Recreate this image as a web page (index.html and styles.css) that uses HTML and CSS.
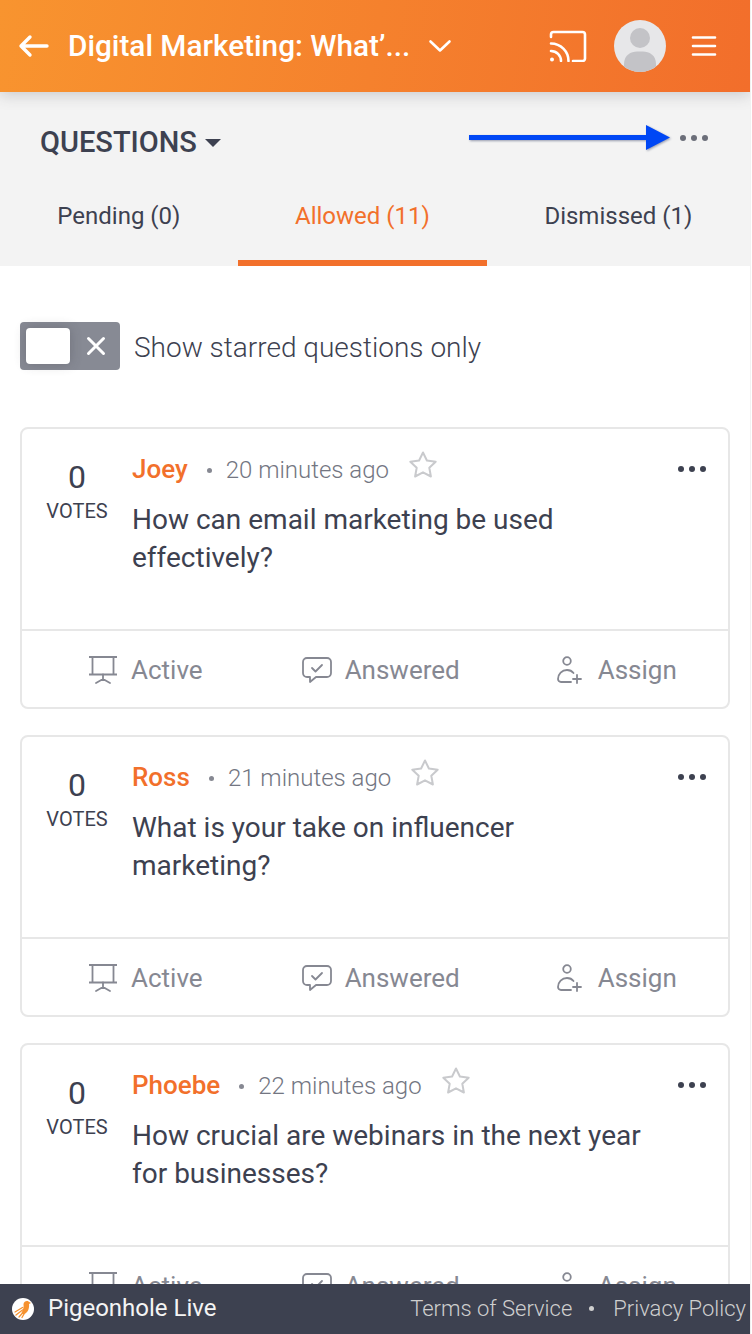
FILE: index.html
```html
<!DOCTYPE html>
<html lang="en">
<head>
<meta charset="utf-8">
<title>Questions</title>
<link rel="stylesheet" href="styles.css">
</head>
<body>
<div class="page">
  <header class="topbar">
    <svg class="back" width="32" height="24" viewBox="0 0 32 24"><path d="M30 12H4M13 3l-9 9 9 9" fill="none" stroke="#fff" stroke-width="3.4" stroke-linecap="round" stroke-linejoin="round"/></svg>
    <div class="title">Digital Marketing: What’...</div>
    <svg class="chev" width="24" height="14" viewBox="0 0 24 14"><path d="M2.500 2.500 12 11.500l9.500-9" fill="none" stroke="#fff" stroke-width="2.600" stroke-linecap="round" stroke-linejoin="round"/></svg>
    <svg class="cast" width="38" height="32" viewBox="0 0 38 32"><path d="M2 7V4.500A2.500 2.500 0 0 1 4.500 2h29A2.500 2.500 0 0 1 36 4.500v24a2.500 2.500 0 0 1-2.500 2.500H24" fill="none" stroke="#fff" stroke-width="2.600" stroke-linecap="round"/><path d="M2 13.500A17.500 17.500 0 0 1 19.500 31M2 21a10 10 0 0 1 10 10" fill="none" stroke="#fff" stroke-width="2.600" stroke-linecap="round"/><circle cx="3" cy="29.500" r="2" fill="#fff"/></svg>
    <svg class="avatar" width="52" height="52" viewBox="0 0 52 52"><defs><clipPath id="av"><circle cx="26" cy="26" r="26"/></clipPath></defs><circle cx="26" cy="26" r="26" fill="#e7e7e9"/><g clip-path="url(#av)" fill="#c3c3c7"><circle cx="26" cy="18" r="10"/><path d="M10 52V44c0-9 7-12.500 13-12.500h6c6 0 13 3.500 13 12.500v8z"/></g></svg>
    <svg class="burger" width="26" height="22" viewBox="0 0 26 22"><path d="M2 2.500h22M2 11h22M2 19.500h22" fill="none" stroke="#fff" stroke-width="2.600" stroke-linecap="round"/></svg>
  </header>

  <section class="subbar">
    <div class="subhead">
      <div class="heading">QUESTIONS<span class="caret"></span></div>
      <div class="dots dots-muted"><i></i><i></i><i></i></div>
    </div>
    <nav class="tabs">
      <div class="tab">Pending (0)</div>
      <div class="tab tab-on">Allowed (11)</div>
      <div class="tab">Dismissed (1)</div>
    </nav>
  </section>

  <div class="filter">
    <div class="toggle">
      <span class="knob"></span>
      <svg class="toggle-x" width="20" height="20" viewBox="0 0 20 20"><path d="M2.500 2.500l15 15M17.500 2.500l-15 15" stroke="#fff" stroke-width="3" stroke-linecap="round"/></svg>
    </div>
    <span class="filter-label">Show starred questions only</span>
  </div>

  <main class="cards">
    <article class="card">
      <div class="card-body">
        <div class="votes"><div class="vote-n">0</div><div class="vote-l">VOTES</div></div>
        <div class="content">
          <div class="meta"><span class="name">Joey</span><span class="sep"></span><span class="time">20 minutes ago</span>
            <svg class="star" width="30" height="28" viewBox="0 0 30 28"><use href="#star-shape"/></svg></div>
          <p class="question">How can email marketing be used effectively?</p>
        </div>
        <div class="dots card-dots"><i></i><i></i><i></i></div>
      </div>
      <div class="card-foot">
        <div class="act act-a"><svg width="30" height="30" viewBox="0 0 30 30"><use href="#i-board"/></svg>Active</div>
        <div class="act act-b"><svg width="30" height="28" viewBox="0 0 30 28"><use href="#i-chat"/></svg>Answered</div>
        <div class="act act-c"><svg width="26" height="30" viewBox="0 0 26 30"><use href="#i-user"/></svg>Assign</div>
      </div>
    </article>

    <article class="card">
      <div class="card-body">
        <div class="votes"><div class="vote-n">0</div><div class="vote-l">VOTES</div></div>
        <div class="content">
          <div class="meta"><span class="name">Ross</span><span class="sep"></span><span class="time">21 minutes ago</span>
            <svg class="star" width="30" height="28" viewBox="0 0 30 28"><use href="#star-shape"/></svg></div>
          <p class="question">What is your take on influencer marketing?</p>
        </div>
        <div class="dots card-dots"><i></i><i></i><i></i></div>
      </div>
      <div class="card-foot">
        <div class="act act-a"><svg width="30" height="30" viewBox="0 0 30 30"><use href="#i-board"/></svg>Active</div>
        <div class="act act-b"><svg width="30" height="28" viewBox="0 0 30 28"><use href="#i-chat"/></svg>Answered</div>
        <div class="act act-c"><svg width="26" height="30" viewBox="0 0 26 30"><use href="#i-user"/></svg>Assign</div>
      </div>
    </article>

    <article class="card">
      <div class="card-body">
        <div class="votes"><div class="vote-n">0</div><div class="vote-l">VOTES</div></div>
        <div class="content">
          <div class="meta"><span class="name">Phoebe</span><span class="sep"></span><span class="time">22 minutes ago</span>
            <svg class="star" width="30" height="28" viewBox="0 0 30 28"><use href="#star-shape"/></svg></div>
          <p class="question">How crucial are webinars in the next year for businesses?</p>
        </div>
        <div class="dots card-dots"><i></i><i></i><i></i></div>
      </div>
      <div class="card-foot">
        <div class="act act-a"><svg width="30" height="30" viewBox="0 0 30 30"><use href="#i-board"/></svg>Active</div>
        <div class="act act-b"><svg width="30" height="28" viewBox="0 0 30 28"><use href="#i-chat"/></svg>Answered</div>
        <div class="act act-c"><svg width="26" height="30" viewBox="0 0 26 30"><use href="#i-user"/></svg>Assign</div>
      </div>
    </article>
  </main>

  <svg class="annot" width="206" height="30" viewBox="0 0 206 30"><path d="M1 11h177V1l24 12.500L178 26V16H1z" fill="#0047f5"/></svg>

  <footer class="footer">
    <svg class="logo" width="22" height="22" viewBox="0 0 22 22"><circle cx="11" cy="11" r="11" fill="#fff"/><path d="M11.500 6c.5-2.500 3-3.500 5-2.500l2.500 1.500-2 1c.5 4-1 8.500-4.500 10-1.500.5-2.500 0-3-1 1.500-3 2.500-6 2-9z" fill="#f6922f"/><path d="M10.500 9.500 3 14M10.500 12 4 17M11 14.500 7 19M12 16l-2 3.500" stroke="#f6922f" stroke-width="1.300" fill="none" stroke-linecap="round"/></svg>
    <span class="brand">Pigeonhole Live</span>
    <span class="links"><span>Terms of Service</span><span class="bullet"></span><span>Privacy Policy</span></span>
  </footer>
</div>

<svg class="defs" width="0" height="0">
  <defs>
    <path id="star-shape" d="M15 2.500l3.900 8 8.800 1.200-6.400 6.100 1.600 8.700L15 22.300l-7.900 4.200 1.600-8.700-6.400-6.100 8.800-1.200z" fill="none" stroke="#c9cacd" stroke-width="2" stroke-linejoin="round"/>
    <g id="i-board" fill="none" stroke="#868892" stroke-width="1.800"><path d="M1 2h28M4.500 2v17.500M25.500 2v17.500M1 19.500h28"/><path d="M15 19.500V24M15 24l-7 4M15 24l7 4" stroke-linecap="round"/></g>
    <g id="i-chat" fill="none" stroke="#868892" stroke-width="1.800" stroke-linejoin="round"><path d="M5 2h20a4 4 0 0 1 4 4v11a4 4 0 0 1-4 4H14l-6 5v-5H5a4 4 0 0 1-4-4V6a4 4 0 0 1 4-4z"/><path d="M10 12l3.500 3.500 6.500-6.500" stroke-linecap="round"/></g>
    <g id="i-user" fill="none" stroke="#868892" stroke-width="1.800" stroke-linecap="round"><circle cx="11" cy="6" r="3.800"/><path d="M15 27H5a3 3 0 0 1-3-3c0-5 4-9 9-9 3 0 5 1 6.500 3M17 24h8M21 20v8"/></g>
  </defs>
</svg>
</body>
</html>
```
FILE: styles.css
```css
* { box-sizing: border-box; }
html, body { margin: 0; padding: 0; background: #fff; }
body { font-family: Roboto, "Liberation Sans", sans-serif; color: #3d4150; }
.page { position: relative; width: 751px; height: 1334px; overflow: hidden; background: #fff; border-right: 1px solid #f1f1f1; }
.defs { position: absolute; }

.topbar { position: relative; z-index: 2; height: 92px; display: flex; align-items: center; padding-left: 17px; background: linear-gradient(100deg, #f8942f 0%, #f26e2b 100%); box-shadow: 0 3px 14px rgba(60, 60, 70, .22); }
.back { flex: none; }
.title { margin-left: 19px; margin-top: -2px; width: 342px; font-size: 29.75px; font-weight: 500; color: #fff; white-space: nowrap; }
.chev { flex: none; margin-left: 18px; }
.cast { flex: none; margin-left: 97px; }
.avatar { flex: none; margin-left: 27px; }
.burger { flex: none; margin-left: 25px; }

.subbar { height: 174px; background: #f3f3f3; display: flex; flex-direction: column; }
.subhead { height: 100px; padding: 0 42px 0 40px; display: flex; align-items: center; justify-content: space-between; }
.heading { font-size: 29px; font-weight: 500; color: #3d4150; display: flex; align-items: center; }
.caret { margin-left: 8px; margin-top: 2px; border: 8px solid transparent; border-top: 8px solid #3d4150; border-bottom: 0; }
.dots { display: flex; gap: 5px; }
.dots i { width: 6px; height: 6px; border-radius: 50%; background: #3d4150; }
.dots-muted { margin-top: -8px; }
.dots-muted i { background: #6b6e79; }

.tabs { display: flex; margin-top: -1px; flex: 1; }
.tab { padding: 0 57.3px; font-size: 24px; line-height: 50px; white-space: nowrap; color: #3d4150; }
.tab-on { color: #f2702b; border-bottom: 6px solid #f2702b; }

.filter { height: 161px; padding: 56px 0 0 20px; display: flex; align-items: flex-start; }
.toggle { position: relative; width: 100px; height: 48px; border-radius: 4px; background: #878a94; display: flex; align-items: center; justify-content: flex-end; padding-right: 14px; }
.knob { position: absolute; left: 6px; top: 6px; width: 44px; height: 36px; background: #fff; border-radius: 4px; box-shadow: 0 0 12px rgba(60, 60, 70, .3); }
.filter-label { margin-left: 14px; font-size: 28px; font-weight: 300; line-height: 52px; color: #3d4150; }

.cards { display: flex; flex-direction: column; gap: 26px; padding: 0 20px; }
.card { height: 282px; flex: none; border: 2px solid #e7e7e7; border-radius: 8px; display: flex; flex-direction: column; background: #fff; }
.card-body { position: relative; height: 202px; flex: none; display: flex; border-bottom: 2px solid #e7e7e7; }
.votes { width: 110px; flex: none; text-align: center; padding-top: 30px; }
.vote-n { font-size: 32px; line-height: 36px; }
.vote-l { font-size: 20px; line-height: 28px; margin-top: 2px; }
.content { flex: 1; padding-top: 24px; }
.meta { display: flex; align-items: center; height: 34px; }
.name { font-size: 26px; font-weight: 500; color: #f2702b; margin-top: -2px; }
.sep { width: 5px; height: 5px; border-radius: 50%; background: #868892; margin: 0 14px 0 19px; }
.time { font-size: 24px; font-weight: 300; color: #737682; }
.star { margin-left: 19px; margin-top: -12px; flex: none; }
.question { margin: 14px 0 0; width: 510px; font-size: 28px; line-height: 38px; color: #3d4150; }
.card-dots { position: absolute; top: 37px; right: 22px; }

.card-foot { flex: 1; display: flex; align-items: center; padding-top: 2px; }
.act { display: flex; align-items: center; font-size: 26px; color: #868892; white-space: nowrap; }
.act svg { flex: none; margin-right: 13px; }
.act-a { margin-left: 66px; }
.act-b { margin-left: 99px; }
.act-c { margin-left: 96px; }
.act-c svg { margin-right: 16px; }

.annot { position: absolute; left: 468px; top: 124px; z-index: 3; filter: drop-shadow(1px 1px 1px rgba(40, 50, 90, .45)); }

.footer { position: absolute; left: 0; right: 0; bottom: 0; z-index: 4; height: 50px; background: #3d4150; display: flex; align-items: center; padding-left: 12px; color: #fff; }
.brand { margin-left: 14px; font-size: 24px; color: #f4f4f4; margin-top: -2px; }
.links { margin-left: auto; padding-right: 4px; display: flex; align-items: center; font-size: 22px; font-weight: 300; color: #cfcfcf; margin-top: -1px; }
.bullet { width: 5px; height: 5px; border-radius: 50%; background: #cfcfcf; margin: 0 19px 0 17px; }
```
